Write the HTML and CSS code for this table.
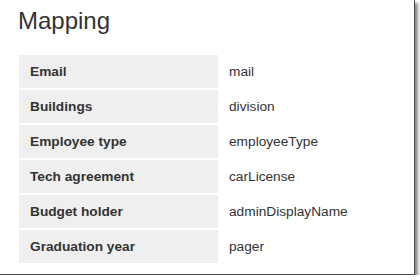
FILE: index.html
```html
<!DOCTYPE html>
<html>
  <head>
    <title>Mapping</title>
    <link rel="stylesheet" href="styles.css">
  </head>
  <body>
    <div class="fenster">
      <h1>Mapping</h1>
      <table class="mapping">
        <tr><td class="feld">Email</td><td>mail</td></tr>
        <tr><td class="feld">Buildings</td><td>division</td></tr>
        <tr><td class="feld">Employee type</td><td>employeeType</td></tr>
        <tr><td class="feld">Tech agreement</td><td>carLicense</td></tr>
        <tr><td class="feld">Budget holder</td><td>adminDisplayName</td></tr>
        <tr><td class="feld">Graduation year</td><td>pager</td></tr>
      </table>
    </div>
  </body>
</html>
```

FILE: styles.css
```css
  body {
    margin: 0;
    background: #fff;
    font-family: "Liberation Sans", Arial, sans-serif;
    color: #333;
  }

  .fenster {
    width: 396px;
    height: 274px;
    padding-left: 18px;
    border-right: 1px solid #4a4a4a;
    border-bottom: 1px solid #4a4a4a;
    box-shadow: 3px 3px 3px rgba(0, 0, 0, 0.45);
    overflow: hidden;
  }

  h1 {
    margin: 8px 0 21px;
    font-size: 24px;
    font-weight: normal;
    line-height: 26px;
  }

  .mapping {
    margin-left: 1px;
    border-collapse: collapse;
    font-size: 13.7px;
    line-height: 17px;
  }

  .mapping td {
    padding: 8px 11px;
  }

  .mapping tr + tr td {
    border-top: 2px solid #fff;
  }

  .mapping .feld {
    width: 177px;
    background: #efefef;
    font-weight: bold;
  }
```
